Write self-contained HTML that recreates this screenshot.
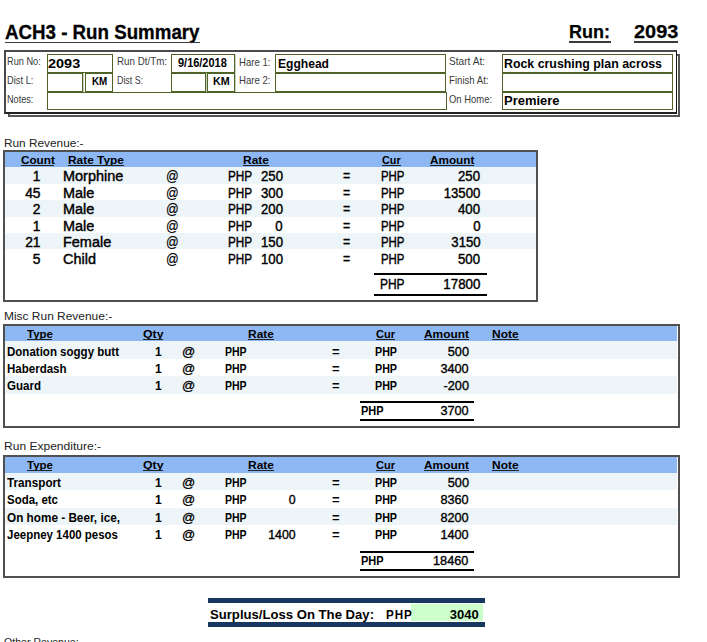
<!DOCTYPE html>
<html><head><meta charset="utf-8"><style>
html,body{margin:0;padding:0;background:#fff;width:707px;height:642px;overflow:hidden;position:relative}
.t{position:absolute;white-space:pre;line-height:0;font-family:"Liberation Sans",sans-serif;font-weight:bold;color:#000}
.r{position:absolute;box-sizing:border-box}
</style></head><body>
<div class="t" style="left:4.50px;top:31.87px;font-size:20px;transform:scaleX(0.9359);transform-origin:left 0;-webkit-text-stroke:0.3px #000;">ACH3 - Run Summary</div>
<div class="r" style="left:4.5px;top:41.5px;width:195.0px;height:1.5px;background:#3a3a3a;"></div>
<div class="t" style="left:569.20px;top:32.19px;font-size:18.5px;transform:scaleX(0.9734);transform-origin:left 0;-webkit-text-stroke:0.25px #000;">Run:</div>
<div class="r" style="left:569px;top:41.2px;width:41.5px;height:1.6px;background:#3a3a3a;"></div>
<div class="t" style="left:633.50px;top:32.19px;font-size:18.5px;transform:scaleX(1.0764);transform-origin:left 0;-webkit-text-stroke:0.25px #000;">2093</div>
<div class="r" style="left:633.5px;top:41.2px;width:44.5px;height:1.6px;background:#3a3a3a;"></div>
<div class="r" style="left:8px;top:54px;width:672px;height:63px;border:2px solid #555;"></div>
<div class="r" style="left:4px;top:50px;width:673px;height:64px;border-left:2px solid #4a4a4a;border-top:2px solid #4a4a4a;border-right:1px solid #111;border-bottom:2px solid #222;background:#fff;"></div>
<div class="r" style="left:47px;top:54px;width:66px;height:19px;border:1px solid #4F6228;"></div>
<div class="r" style="left:47px;top:73px;width:36px;height:19px;border:1px solid #4F6228;"></div>
<div class="r" style="left:85px;top:73px;width:28px;height:19px;border:1px solid #4F6228;"></div>
<div class="r" style="left:47px;top:92px;width:400px;height:18px;border:1px solid #4F6228;"></div>
<div class="r" style="left:171px;top:54px;width:64px;height:19px;border:1px solid #4F6228;"></div>
<div class="r" style="left:171px;top:73px;width:35px;height:19px;border:1px solid #4F6228;"></div>
<div class="r" style="left:207px;top:73px;width:28px;height:19px;border:1px solid #4F6228;"></div>
<div class="r" style="left:275px;top:54px;width:171px;height:19px;border:1px solid #4F6228;"></div>
<div class="r" style="left:275px;top:73px;width:171px;height:19px;border:1px solid #4F6228;"></div>
<div class="r" style="left:502px;top:54px;width:171px;height:19px;border:1px solid #4F6228;"></div>
<div class="r" style="left:502px;top:73px;width:171px;height:19px;border:1px solid #4F6228;"></div>
<div class="r" style="left:502px;top:92px;width:171px;height:18px;border:1px solid #4F6228;"></div>
<div class="r" style="left:83px;top:73px;width:1px;height:19px;background:#c9d0bd;"></div>
<div class="r" style="left:206px;top:73px;width:1px;height:19px;background:#c9d0bd;"></div>
<div class="r" style="left:235px;top:54px;width:1px;height:38px;background:#c9d0bd;"></div>
<div class="t" style="left:7.30px;top:61.16px;font-size:10.5px;font-weight:normal;color:#3a3a3a;transform:scaleX(0.8749);transform-origin:left 0;">Run No:</div>
<div class="t" style="left:7.30px;top:80.26px;font-size:10.5px;font-weight:normal;color:#3a3a3a;transform:scaleX(0.8872);transform-origin:left 0;">Dist L:</div>
<div class="t" style="left:7.30px;top:99.16px;font-size:10.5px;font-weight:normal;color:#3a3a3a;transform:scaleX(0.8700);transform-origin:left 0;">Notes:</div>
<div class="t" style="left:117.00px;top:61.16px;font-size:10.5px;font-weight:normal;color:#3a3a3a;transform:scaleX(0.9316);transform-origin:left 0;">Run Dt/Tm:</div>
<div class="t" style="left:117.00px;top:80.26px;font-size:10.5px;font-weight:normal;color:#3a3a3a;transform:scaleX(0.8409);transform-origin:left 0;">Dist S:</div>
<div class="t" style="left:238.50px;top:61.66px;font-size:10.5px;font-weight:normal;color:#3a3a3a;transform:scaleX(0.9149);transform-origin:left 0;">Hare 1:</div>
<div class="t" style="left:238.50px;top:80.16px;font-size:10.5px;font-weight:normal;color:#3a3a3a;transform:scaleX(0.9149);transform-origin:left 0;">Hare 2:</div>
<div class="t" style="left:449.00px;top:61.16px;font-size:10.5px;font-weight:normal;color:#3a3a3a;transform:scaleX(0.9639);transform-origin:left 0;">Start At:</div>
<div class="t" style="left:449.00px;top:80.26px;font-size:10.5px;font-weight:normal;color:#3a3a3a;transform:scaleX(0.9170);transform-origin:left 0;">Finish At:</div>
<div class="t" style="left:449.00px;top:99.16px;font-size:10.5px;font-weight:normal;color:#3a3a3a;transform:scaleX(0.8987);transform-origin:left 0;">On Home:</div>
<div class="t" style="left:48.40px;top:63.94px;font-size:12px;transform:scaleX(1.2063);transform-origin:left 0;">2093</div>
<div class="t" style="left:91.50px;top:81.31px;font-size:11.5px;transform:scaleX(0.8555);transform-origin:left 0;">KM</div>
<div class="t" style="left:178.40px;top:62.57px;font-size:12.2px;transform:scaleX(0.8992);transform-origin:left 0;">9/16/2018</div>
<div class="t" style="left:213.00px;top:81.31px;font-size:11.5px;transform:scaleX(0.9282);transform-origin:left 0;">KM</div>
<div class="t" style="left:277.90px;top:63.74px;font-size:12px;transform:scaleX(1.0065);transform-origin:left 0;">Egghead</div>
<div class="t" style="left:503.50px;top:64.04px;font-size:12px;transform:scaleX(1.0301);transform-origin:left 0;">Rock crushing plan across</div>
<div class="t" style="left:503.50px;top:101.24px;font-size:12px;transform:scaleX(1.0804);transform-origin:left 0;">Premiere</div>
<div class="t" style="left:4.00px;top:142.71px;font-size:11.5px;font-weight:normal;color:#222;transform:scaleX(1.0278);transform-origin:left 0;">Run Revenue:-</div>
<div class="r" style="left:3px;top:150px;width:535px;height:152px;border:2px solid #505050;background:#fff;"></div>
<div class="r" style="left:5px;top:152px;width:531px;height:15px;background:#8EB8F3;"></div>
<div class="r" style="left:5px;top:167px;width:531px;height:16.5px;background:#EDF5F8;"></div>
<div class="r" style="left:5px;top:200px;width:531px;height:16.5px;background:#EDF5F8;"></div>
<div class="r" style="left:5px;top:232.5px;width:531px;height:16.5px;background:#EDF5F8;"></div>
<div class="t" style="left:20.70px;top:160.08px;font-size:11.3px;transform:scaleX(1.0358);transform-origin:left 0;">Count</div>
<div class="r" style="left:20.7px;top:165.2px;width:33.8px;height:1.25px;background:#222;"></div>
<div class="t" style="left:68.00px;top:160.08px;font-size:11.3px;transform:scaleX(1.0533);transform-origin:left 0;">Rate Type</div>
<div class="r" style="left:68px;top:165.2px;width:56px;height:1.25px;background:#222;"></div>
<div class="t" style="left:243.00px;top:160.08px;font-size:11.3px;transform:scaleX(1.0616);transform-origin:left 0;">Rate</div>
<div class="r" style="left:243px;top:165.2px;width:26px;height:1.25px;background:#222;"></div>
<div class="t" style="left:382.00px;top:160.08px;font-size:11.3px;transform:scaleX(0.9558);transform-origin:left 0;">Cur</div>
<div class="r" style="left:382px;top:165.2px;width:18.600000000000023px;height:1.25px;background:#222;"></div>
<div class="t" style="left:429.60px;top:160.08px;font-size:11.3px;transform:scaleX(1.0403);transform-origin:left 0;">Amount</div>
<div class="r" style="left:429.6px;top:165.2px;width:44.39999999999998px;height:1.25px;background:#222;"></div>
<div class="t" style="left:32.83px;top:177.22px;font-size:13.8px;font-weight:normal;-webkit-text-stroke:0.4px #000;">1</div>
<div class="t" style="left:63.40px;top:177.22px;font-size:13.8px;font-weight:normal;transform:scaleX(1.0480);transform-origin:left 0;-webkit-text-stroke:0.4px #000;">Morphine</div>
<div class="t" style="left:165.70px;top:177.22px;font-size:13.8px;font-weight:normal;transform:scaleX(0.9065);transform-origin:left 0;-webkit-text-stroke:0.2px #000;">@</div>
<div class="t" style="left:228.30px;top:177.22px;font-size:13.8px;font-weight:normal;transform:scaleX(0.8529);transform-origin:left 0;-webkit-text-stroke:0.4px #000;">PHP</div>
<div class="t" style="left:259.98px;top:177.22px;font-size:13.8px;font-weight:normal;transform:scaleX(0.9560);transform-origin:right 0;-webkit-text-stroke:0.4px #000;">250</div>
<div class="t" style="left:342.80px;top:177.22px;font-size:13.8px;font-weight:normal;transform:scaleX(0.8934);transform-origin:left 0;-webkit-text-stroke:0.4px #000;">=</div>
<div class="t" style="left:380.70px;top:177.22px;font-size:13.8px;font-weight:normal;transform:scaleX(0.8282);transform-origin:left 0;-webkit-text-stroke:0.4px #000;">PHP</div>
<div class="t" style="left:457.48px;top:177.22px;font-size:13.8px;font-weight:normal;transform:scaleX(0.9560);transform-origin:right 0;-webkit-text-stroke:0.4px #000;">250</div>
<div class="t" style="left:25.15px;top:193.78px;font-size:13.8px;font-weight:normal;-webkit-text-stroke:0.4px #000;">45</div>
<div class="t" style="left:63.40px;top:193.78px;font-size:13.8px;font-weight:normal;transform:scaleX(1.0480);transform-origin:left 0;-webkit-text-stroke:0.4px #000;">Male</div>
<div class="t" style="left:165.70px;top:193.78px;font-size:13.8px;font-weight:normal;transform:scaleX(0.9065);transform-origin:left 0;-webkit-text-stroke:0.2px #000;">@</div>
<div class="t" style="left:228.30px;top:193.78px;font-size:13.8px;font-weight:normal;transform:scaleX(0.8529);transform-origin:left 0;-webkit-text-stroke:0.4px #000;">PHP</div>
<div class="t" style="left:259.98px;top:193.78px;font-size:13.8px;font-weight:normal;transform:scaleX(0.9560);transform-origin:right 0;-webkit-text-stroke:0.4px #000;">300</div>
<div class="t" style="left:342.80px;top:193.78px;font-size:13.8px;font-weight:normal;transform:scaleX(0.8934);transform-origin:left 0;-webkit-text-stroke:0.4px #000;">=</div>
<div class="t" style="left:380.70px;top:193.78px;font-size:13.8px;font-weight:normal;transform:scaleX(0.8282);transform-origin:left 0;-webkit-text-stroke:0.4px #000;">PHP</div>
<div class="t" style="left:442.12px;top:193.78px;font-size:13.8px;font-weight:normal;transform:scaleX(0.9560);transform-origin:right 0;-webkit-text-stroke:0.4px #000;">13500</div>
<div class="t" style="left:32.83px;top:210.34px;font-size:13.8px;font-weight:normal;-webkit-text-stroke:0.4px #000;">2</div>
<div class="t" style="left:63.40px;top:210.34px;font-size:13.8px;font-weight:normal;transform:scaleX(1.0480);transform-origin:left 0;-webkit-text-stroke:0.4px #000;">Male</div>
<div class="t" style="left:165.70px;top:210.34px;font-size:13.8px;font-weight:normal;transform:scaleX(0.9065);transform-origin:left 0;-webkit-text-stroke:0.2px #000;">@</div>
<div class="t" style="left:228.30px;top:210.34px;font-size:13.8px;font-weight:normal;transform:scaleX(0.8529);transform-origin:left 0;-webkit-text-stroke:0.4px #000;">PHP</div>
<div class="t" style="left:259.98px;top:210.34px;font-size:13.8px;font-weight:normal;transform:scaleX(0.9560);transform-origin:right 0;-webkit-text-stroke:0.4px #000;">200</div>
<div class="t" style="left:342.80px;top:210.34px;font-size:13.8px;font-weight:normal;transform:scaleX(0.8934);transform-origin:left 0;-webkit-text-stroke:0.4px #000;">=</div>
<div class="t" style="left:380.70px;top:210.34px;font-size:13.8px;font-weight:normal;transform:scaleX(0.8282);transform-origin:left 0;-webkit-text-stroke:0.4px #000;">PHP</div>
<div class="t" style="left:457.48px;top:210.34px;font-size:13.8px;font-weight:normal;transform:scaleX(0.9560);transform-origin:right 0;-webkit-text-stroke:0.4px #000;">400</div>
<div class="t" style="left:32.83px;top:226.90px;font-size:13.8px;font-weight:normal;-webkit-text-stroke:0.4px #000;">1</div>
<div class="t" style="left:63.40px;top:226.90px;font-size:13.8px;font-weight:normal;transform:scaleX(1.0480);transform-origin:left 0;-webkit-text-stroke:0.4px #000;">Male</div>
<div class="t" style="left:165.70px;top:226.90px;font-size:13.8px;font-weight:normal;transform:scaleX(0.9065);transform-origin:left 0;-webkit-text-stroke:0.2px #000;">@</div>
<div class="t" style="left:228.30px;top:226.90px;font-size:13.8px;font-weight:normal;transform:scaleX(0.8529);transform-origin:left 0;-webkit-text-stroke:0.4px #000;">PHP</div>
<div class="t" style="left:275.32px;top:226.90px;font-size:13.8px;font-weight:normal;transform:scaleX(0.9560);transform-origin:right 0;-webkit-text-stroke:0.4px #000;">0</div>
<div class="t" style="left:342.80px;top:226.90px;font-size:13.8px;font-weight:normal;transform:scaleX(0.8934);transform-origin:left 0;-webkit-text-stroke:0.4px #000;">=</div>
<div class="t" style="left:380.70px;top:226.90px;font-size:13.8px;font-weight:normal;transform:scaleX(0.8282);transform-origin:left 0;-webkit-text-stroke:0.4px #000;">PHP</div>
<div class="t" style="left:472.82px;top:226.90px;font-size:13.8px;font-weight:normal;transform:scaleX(0.9560);transform-origin:right 0;-webkit-text-stroke:0.4px #000;">0</div>
<div class="t" style="left:25.15px;top:243.46px;font-size:13.8px;font-weight:normal;-webkit-text-stroke:0.4px #000;">21</div>
<div class="t" style="left:63.40px;top:243.46px;font-size:13.8px;font-weight:normal;transform:scaleX(1.0480);transform-origin:left 0;-webkit-text-stroke:0.4px #000;">Female</div>
<div class="t" style="left:165.70px;top:243.46px;font-size:13.8px;font-weight:normal;transform:scaleX(0.9065);transform-origin:left 0;-webkit-text-stroke:0.2px #000;">@</div>
<div class="t" style="left:228.30px;top:243.46px;font-size:13.8px;font-weight:normal;transform:scaleX(0.8529);transform-origin:left 0;-webkit-text-stroke:0.4px #000;">PHP</div>
<div class="t" style="left:259.98px;top:243.46px;font-size:13.8px;font-weight:normal;transform:scaleX(0.9560);transform-origin:right 0;-webkit-text-stroke:0.4px #000;">150</div>
<div class="t" style="left:342.80px;top:243.46px;font-size:13.8px;font-weight:normal;transform:scaleX(0.8934);transform-origin:left 0;-webkit-text-stroke:0.4px #000;">=</div>
<div class="t" style="left:380.70px;top:243.46px;font-size:13.8px;font-weight:normal;transform:scaleX(0.8282);transform-origin:left 0;-webkit-text-stroke:0.4px #000;">PHP</div>
<div class="t" style="left:449.80px;top:243.46px;font-size:13.8px;font-weight:normal;transform:scaleX(0.9560);transform-origin:right 0;-webkit-text-stroke:0.4px #000;">3150</div>
<div class="t" style="left:32.83px;top:260.02px;font-size:13.8px;font-weight:normal;-webkit-text-stroke:0.4px #000;">5</div>
<div class="t" style="left:63.40px;top:260.02px;font-size:13.8px;font-weight:normal;transform:scaleX(1.0480);transform-origin:left 0;-webkit-text-stroke:0.4px #000;">Child</div>
<div class="t" style="left:165.70px;top:260.02px;font-size:13.8px;font-weight:normal;transform:scaleX(0.9065);transform-origin:left 0;-webkit-text-stroke:0.2px #000;">@</div>
<div class="t" style="left:228.30px;top:260.02px;font-size:13.8px;font-weight:normal;transform:scaleX(0.8529);transform-origin:left 0;-webkit-text-stroke:0.4px #000;">PHP</div>
<div class="t" style="left:259.98px;top:260.02px;font-size:13.8px;font-weight:normal;transform:scaleX(0.9560);transform-origin:right 0;-webkit-text-stroke:0.4px #000;">100</div>
<div class="t" style="left:342.80px;top:260.02px;font-size:13.8px;font-weight:normal;transform:scaleX(0.8934);transform-origin:left 0;-webkit-text-stroke:0.4px #000;">=</div>
<div class="t" style="left:380.70px;top:260.02px;font-size:13.8px;font-weight:normal;transform:scaleX(0.8282);transform-origin:left 0;-webkit-text-stroke:0.4px #000;">PHP</div>
<div class="t" style="left:457.48px;top:260.02px;font-size:13.8px;font-weight:normal;transform:scaleX(0.9560);transform-origin:right 0;-webkit-text-stroke:0.4px #000;">500</div>
<div class="r" style="left:374px;top:273px;width:113px;height:2px;background:#000;"></div>
<div class="r" style="left:374px;top:293.5px;width:113px;height:2.5px;background:#000;"></div>
<div class="t" style="left:379.70px;top:285.12px;font-size:13.8px;font-weight:normal;transform:scaleX(0.8670);transform-origin:left 0;-webkit-text-stroke:0.4px #000;">PHP</div>
<div class="t" style="left:441.62px;top:285.12px;font-size:13.8px;font-weight:normal;transform:scaleX(0.9642);transform-origin:right 0;-webkit-text-stroke:0.4px #000;">17800</div>
<div class="t" style="left:4.30px;top:316.41px;font-size:11.5px;font-weight:normal;color:#222;transform:scaleX(1.0386);transform-origin:left 0;">Misc Run Revenue:-</div>
<div class="r" style="left:3px;top:324px;width:677px;height:104px;border:2px solid #505050;background:#fff;"></div>
<div class="r" style="left:5px;top:326px;width:672px;height:15px;background:#8EB8F3;"></div>
<div class="r" style="left:5px;top:341.0px;width:672px;height:17.5px;background:#EDF5F8;"></div>
<div class="r" style="left:5px;top:376.0px;width:672px;height:17.5px;background:#EDF5F8;"></div>
<div class="t" style="left:26.70px;top:333.91px;font-size:11.5px;transform:scaleX(0.9928);transform-origin:left 0;">Type</div>
<div class="r" style="left:26.7px;top:339.1px;width:25.8px;height:1.25px;background:#222;"></div>
<div class="t" style="left:142.50px;top:333.91px;font-size:11.5px;transform:scaleX(1.0694);transform-origin:left 0;">Qty</div>
<div class="r" style="left:142.5px;top:339.1px;width:20.5px;height:1.25px;background:#222;"></div>
<div class="t" style="left:248.40px;top:333.91px;font-size:11.5px;transform:scaleX(1.0391);transform-origin:left 0;">Rate</div>
<div class="r" style="left:248.4px;top:339.1px;width:25.900000000000006px;height:1.25px;background:#222;"></div>
<div class="t" style="left:376.20px;top:333.91px;font-size:11.5px;transform:scaleX(0.9594);transform-origin:left 0;">Cur</div>
<div class="r" style="left:376.2px;top:339.1px;width:19.0px;height:1.25px;background:#222;"></div>
<div class="t" style="left:423.80px;top:333.91px;font-size:11.5px;transform:scaleX(1.0360);transform-origin:left 0;">Amount</div>
<div class="r" style="left:423.8px;top:339.1px;width:45.0px;height:1.25px;background:#222;"></div>
<div class="t" style="left:492.20px;top:333.91px;font-size:11.5px;transform:scaleX(1.0409);transform-origin:left 0;">Note</div>
<div class="r" style="left:492.2px;top:339.1px;width:26.599999999999966px;height:1.25px;background:#222;"></div>
<div class="t" style="left:7.30px;top:351.94px;font-size:12px;transform:scaleX(0.9602);transform-origin:left 0;">Donation soggy butt</div>
<div class="t" style="left:154.93px;top:351.94px;font-size:12px;">1</div>
<div class="t" style="left:182.20px;top:351.94px;font-size:12px;font-weight:normal;transform:scaleX(1.0836);transform-origin:left 0;-webkit-text-stroke:0.3px #000;">@</div>
<div class="t" style="left:224.70px;top:351.94px;font-size:12px;transform:scaleX(0.8754);transform-origin:left 0;">PHP</div>
<div class="t" style="left:331.60px;top:351.94px;font-size:12px;transform:scaleX(1.0845);transform-origin:left 0;">=</div>
<div class="t" style="left:374.50px;top:351.94px;font-size:12px;transform:scaleX(0.8916);transform-origin:left 0;">PHP</div>
<div class="t" style="left:448.68px;top:351.94px;font-size:12px;font-weight:normal;transform:scaleX(1.0600);transform-origin:right 0;-webkit-text-stroke:0.35px #000;">500</div>
<div class="t" style="left:7.30px;top:368.99px;font-size:12px;transform:scaleX(0.9600);transform-origin:left 0;">Haberdash</div>
<div class="t" style="left:154.93px;top:368.99px;font-size:12px;">1</div>
<div class="t" style="left:182.20px;top:368.99px;font-size:12px;font-weight:normal;transform:scaleX(1.0836);transform-origin:left 0;-webkit-text-stroke:0.3px #000;">@</div>
<div class="t" style="left:224.70px;top:368.99px;font-size:12px;transform:scaleX(0.8754);transform-origin:left 0;">PHP</div>
<div class="t" style="left:331.60px;top:368.99px;font-size:12px;transform:scaleX(1.0845);transform-origin:left 0;">=</div>
<div class="t" style="left:374.50px;top:368.99px;font-size:12px;transform:scaleX(0.8916);transform-origin:left 0;">PHP</div>
<div class="t" style="left:442.01px;top:368.99px;font-size:12px;font-weight:normal;transform:scaleX(1.0600);transform-origin:right 0;-webkit-text-stroke:0.35px #000;">3400</div>
<div class="t" style="left:7.30px;top:386.04px;font-size:12px;transform:scaleX(0.9600);transform-origin:left 0;">Guard</div>
<div class="t" style="left:154.93px;top:386.04px;font-size:12px;">1</div>
<div class="t" style="left:182.20px;top:386.04px;font-size:12px;font-weight:normal;transform:scaleX(1.0836);transform-origin:left 0;-webkit-text-stroke:0.3px #000;">@</div>
<div class="t" style="left:224.70px;top:386.04px;font-size:12px;transform:scaleX(0.8754);transform-origin:left 0;">PHP</div>
<div class="t" style="left:331.60px;top:386.04px;font-size:12px;transform:scaleX(1.0845);transform-origin:left 0;">=</div>
<div class="t" style="left:374.50px;top:386.04px;font-size:12px;transform:scaleX(0.8916);transform-origin:left 0;">PHP</div>
<div class="t" style="left:444.68px;top:386.04px;font-size:12px;font-weight:normal;transform:scaleX(1.0600);transform-origin:right 0;-webkit-text-stroke:0.35px #000;">-200</div>
<div class="r" style="left:360px;top:400.5px;width:114px;height:2px;background:#000;"></div>
<div class="r" style="left:360px;top:418.8px;width:114px;height:2.5px;background:#000;"></div>
<div class="t" style="left:361.20px;top:411.44px;font-size:12px;transform:scaleX(0.9159);transform-origin:left 0;">PHP</div>
<div class="t" style="left:441.51px;top:411.44px;font-size:12px;font-weight:normal;transform:scaleX(1.0600);transform-origin:right 0;-webkit-text-stroke:0.35px #000;">3700</div>
<div class="t" style="left:4.30px;top:446.11px;font-size:11.5px;font-weight:normal;color:#222;transform:scaleX(1.0465);transform-origin:left 0;">Run Expenditure:-</div>
<div class="r" style="left:3px;top:455px;width:677px;height:123px;border:2px solid #505050;background:#fff;"></div>
<div class="r" style="left:5px;top:457px;width:672px;height:16px;background:#8EB8F3;"></div>
<div class="r" style="left:5px;top:473.0px;width:672px;height:17.4px;background:#EDF5F8;"></div>
<div class="r" style="left:5px;top:507.8px;width:672px;height:17.4px;background:#EDF5F8;"></div>
<div class="t" style="left:26.70px;top:464.91px;font-size:11.5px;transform:scaleX(0.9928);transform-origin:left 0;">Type</div>
<div class="r" style="left:26.7px;top:470.1px;width:25.8px;height:1.25px;background:#222;"></div>
<div class="t" style="left:142.50px;top:464.91px;font-size:11.5px;transform:scaleX(1.0694);transform-origin:left 0;">Qty</div>
<div class="r" style="left:142.5px;top:470.1px;width:20.5px;height:1.25px;background:#222;"></div>
<div class="t" style="left:248.40px;top:464.91px;font-size:11.5px;transform:scaleX(1.0391);transform-origin:left 0;">Rate</div>
<div class="r" style="left:248.4px;top:470.1px;width:25.900000000000006px;height:1.25px;background:#222;"></div>
<div class="t" style="left:376.20px;top:464.91px;font-size:11.5px;transform:scaleX(0.9594);transform-origin:left 0;">Cur</div>
<div class="r" style="left:376.2px;top:470.1px;width:19.0px;height:1.25px;background:#222;"></div>
<div class="t" style="left:423.80px;top:464.91px;font-size:11.5px;transform:scaleX(1.0360);transform-origin:left 0;">Amount</div>
<div class="r" style="left:423.8px;top:470.1px;width:45.0px;height:1.25px;background:#222;"></div>
<div class="t" style="left:492.20px;top:464.91px;font-size:11.5px;transform:scaleX(1.0409);transform-origin:left 0;">Note</div>
<div class="r" style="left:492.2px;top:470.1px;width:26.599999999999966px;height:1.25px;background:#222;"></div>
<div class="t" style="left:7.30px;top:482.94px;font-size:12px;transform:scaleX(0.9758);transform-origin:left 0;">Transport</div>
<div class="t" style="left:154.93px;top:482.94px;font-size:12px;">1</div>
<div class="t" style="left:182.20px;top:482.94px;font-size:12px;font-weight:normal;transform:scaleX(1.0836);transform-origin:left 0;-webkit-text-stroke:0.3px #000;">@</div>
<div class="t" style="left:224.70px;top:482.94px;font-size:12px;transform:scaleX(0.8754);transform-origin:left 0;">PHP</div>
<div class="t" style="left:331.60px;top:482.94px;font-size:12px;transform:scaleX(1.0845);transform-origin:left 0;">=</div>
<div class="t" style="left:374.50px;top:482.94px;font-size:12px;transform:scaleX(0.8916);transform-origin:left 0;">PHP</div>
<div class="t" style="left:448.68px;top:482.94px;font-size:12px;font-weight:normal;transform:scaleX(1.0600);transform-origin:right 0;-webkit-text-stroke:0.35px #000;">500</div>
<div class="t" style="left:7.30px;top:500.34px;font-size:12px;transform:scaleX(0.9560);transform-origin:left 0;">Soda, etc</div>
<div class="t" style="left:154.93px;top:500.34px;font-size:12px;">1</div>
<div class="t" style="left:182.20px;top:500.34px;font-size:12px;font-weight:normal;transform:scaleX(1.0836);transform-origin:left 0;-webkit-text-stroke:0.3px #000;">@</div>
<div class="t" style="left:224.70px;top:500.34px;font-size:12px;transform:scaleX(0.8754);transform-origin:left 0;">PHP</div>
<div class="t" style="left:289.33px;top:500.34px;font-size:12px;font-weight:normal;transform:scaleX(1.0300);transform-origin:right 0;-webkit-text-stroke:0.35px #000;">0</div>
<div class="t" style="left:331.60px;top:500.34px;font-size:12px;transform:scaleX(1.0845);transform-origin:left 0;">=</div>
<div class="t" style="left:374.50px;top:500.34px;font-size:12px;transform:scaleX(0.8916);transform-origin:left 0;">PHP</div>
<div class="t" style="left:442.01px;top:500.34px;font-size:12px;font-weight:normal;transform:scaleX(1.0600);transform-origin:right 0;-webkit-text-stroke:0.35px #000;">8360</div>
<div class="t" style="left:7.30px;top:517.74px;font-size:12px;transform:scaleX(0.9794);transform-origin:left 0;">On home - Beer, ice,</div>
<div class="t" style="left:154.93px;top:517.74px;font-size:12px;">1</div>
<div class="t" style="left:182.20px;top:517.74px;font-size:12px;font-weight:normal;transform:scaleX(1.0836);transform-origin:left 0;-webkit-text-stroke:0.3px #000;">@</div>
<div class="t" style="left:224.70px;top:517.74px;font-size:12px;transform:scaleX(0.8754);transform-origin:left 0;">PHP</div>
<div class="t" style="left:331.60px;top:517.74px;font-size:12px;transform:scaleX(1.0845);transform-origin:left 0;">=</div>
<div class="t" style="left:374.50px;top:517.74px;font-size:12px;transform:scaleX(0.8916);transform-origin:left 0;">PHP</div>
<div class="t" style="left:442.01px;top:517.74px;font-size:12px;font-weight:normal;transform:scaleX(1.0600);transform-origin:right 0;-webkit-text-stroke:0.35px #000;">8200</div>
<div class="t" style="left:7.30px;top:535.14px;font-size:12px;transform:scaleX(0.9563);transform-origin:left 0;">Jeepney 1400 pesos</div>
<div class="t" style="left:154.93px;top:535.14px;font-size:12px;">1</div>
<div class="t" style="left:182.20px;top:535.14px;font-size:12px;font-weight:normal;transform:scaleX(1.0836);transform-origin:left 0;-webkit-text-stroke:0.3px #000;">@</div>
<div class="t" style="left:224.70px;top:535.14px;font-size:12px;transform:scaleX(0.8754);transform-origin:left 0;">PHP</div>
<div class="t" style="left:269.31px;top:535.14px;font-size:12px;font-weight:normal;transform:scaleX(1.0300);transform-origin:right 0;-webkit-text-stroke:0.35px #000;">1400</div>
<div class="t" style="left:331.60px;top:535.14px;font-size:12px;transform:scaleX(1.0845);transform-origin:left 0;">=</div>
<div class="t" style="left:374.50px;top:535.14px;font-size:12px;transform:scaleX(0.8916);transform-origin:left 0;">PHP</div>
<div class="t" style="left:442.01px;top:535.14px;font-size:12px;font-weight:normal;transform:scaleX(1.0600);transform-origin:right 0;-webkit-text-stroke:0.35px #000;">1400</div>
<div class="r" style="left:360px;top:550.8px;width:114px;height:2px;background:#000;"></div>
<div class="r" style="left:360px;top:568.6px;width:114px;height:2.5px;background:#000;"></div>
<div class="t" style="left:361.20px;top:560.74px;font-size:12px;transform:scaleX(0.9159);transform-origin:left 0;">PHP</div>
<div class="t" style="left:434.83px;top:560.74px;font-size:12px;font-weight:normal;transform:scaleX(1.0600);transform-origin:right 0;-webkit-text-stroke:0.35px #000;">18460</div>
<div class="r" style="left:208px;top:598px;width:276.5px;height:4.7px;background:#17375E;"></div>
<div class="r" style="left:208px;top:622px;width:276.5px;height:4.7px;background:#17375E;"></div>
<div class="r" style="left:410.5px;top:604.3px;width:72.8px;height:17.2px;background:#CCFFCC;"></div>
<div class="t" style="left:209.50px;top:614.54px;font-size:12px;transform:scaleX(1.0932);transform-origin:left 0;">Surplus/Loss On The Day:</div>
<div class="t" style="left:386.30px;top:614.54px;font-size:12px;transform:scaleX(0.9700);transform-origin:left 0;letter-spacing:0.9px;">PHP</div>
<div class="t" style="left:451.81px;top:614.54px;font-size:12px;transform:scaleX(1.0864);transform-origin:right 0;">3040</div>
<div class="t" style="left:4.30px;top:642.41px;font-size:11.5px;font-weight:normal;color:#222;transform:scaleX(0.9200);transform-origin:left 0;">Other Revenue:-</div>
</body></html>
